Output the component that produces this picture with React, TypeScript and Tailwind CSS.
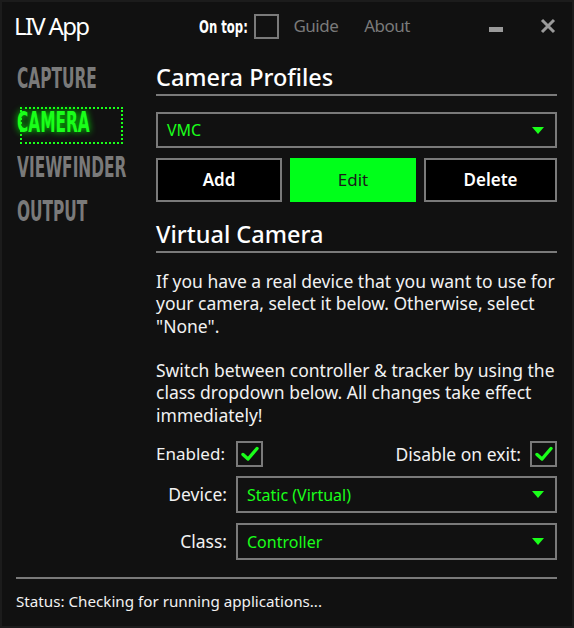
import React from "react";

const font = { fontFamily: '"Noto Sans", "Open Sans", sans-serif' };

function Arrow() {
  return (
    <svg width="12" height="7" viewBox="0 0 12 7" className="shrink-0">
      <polygon points="0,0 12,0 6,7" fill="#1aff1a" />
    </svg>
  );
}

function Select({ value, className = "" }: { value: string; className?: string }) {
  return (
    <div
      className={`flex items-center justify-between border-2 border-[#7a7a7a] bg-[#111111] pl-[9px] pr-[11px] ${className}`}
    >
      <span className="text-[16px] text-[#1aff1a]">{value}</span>
      <Arrow />
    </div>
  );
}

function Check({ checked }: { checked: boolean }) {
  return (
    <div className="flex h-[26px] w-[27px] items-center justify-center border-2 border-[#7a7a7a]">
      {checked && (
        <svg width="18" height="16" viewBox="0 0 18 16">
          <polyline
            points="2,8.5 7,13 16,2.5"
            fill="none"
            stroke="#1aff1a"
            strokeWidth="3.4"
            strokeLinecap="round"
            strokeLinejoin="round"
          />
        </svg>
      )}
    </div>
  );
}

function NavItem({ label, active, offset = "" }: { label: string; active?: boolean; offset?: string }) {
  return (
    <div className={`relative flex h-[44px] items-center ${offset}`}>
      {active && (
        <div className="absolute left-[3px] top-[7px] h-[37px] w-[103px] border-2 border-dotted border-[#1aff1a]" />
      )}
      <span
        className={`inline-block origin-left scale-x-[0.9] scale-y-[1.5] whitespace-nowrap text-[19px] font-bold leading-none ${
          active ? "text-[#1aff1a] [text-shadow:0_0_6px_#00ff00]" : "text-[#7a7a7a]"
        }`}
        style={{ fontFamily: '"DejaVu Sans Condensed", "DejaVu Sans", sans-serif' }}
      >
        {label}
      </span>
    </div>
  );
}

export default function App() {
  return (
    <div
      className="flex h-[628px] w-[574px] flex-col border-2 border-[#1c1c1c] bg-[#111111] text-[#f2f2f2]"
      style={font}
    >
      {/* Title bar */}
      <div className="flex h-[48px] items-center pl-[12px] pr-[16px]">
        <span className="text-[24px] leading-none tracking-[-1.7px] text-white">LIV App</span>
        <div className="ml-auto flex items-center">
          <span
            className="mr-[9px] inline-block w-[46px] origin-left scale-x-[0.72] whitespace-nowrap text-[18px] font-bold text-white"
            style={{ fontFamily: '"DejaVu Sans Condensed", sans-serif' }}
          >
            On top:
          </span>
          <div className="h-[25px] w-[25px] border-2 border-[#7a7a7a]" />
          <span className="ml-[14px] text-[17px] tracking-[-0.5px] text-[#7a7a7a]">Guide</span>
          <span className="ml-[26px] text-[17px] tracking-[-0.5px] text-[#7a7a7a]">About</span>
          <div className="ml-[79px] mt-[6px] h-[5px] w-[14px] bg-[#9a9a9a]" />
          <svg width="16" height="16" viewBox="0 0 16 16" className="ml-[37px]">
            <path d="M2 2 L14 14 M14 2 L2 14" stroke="#9a9a9a" strokeWidth="3" />
          </svg>
        </div>
      </div>

      {/* Body */}
      <div className="flex h-[527px]">
        {/* Sidebar */}
        <div className="w-[154px] pl-[15px] pt-[6px]">
          <NavItem label="CAPTURE" />
          <NavItem label="CAMERA" active />
          <NavItem label="VIEWFINDER" offset="mt-[1px]" />
          <NavItem label="OUTPUT" />
        </div>

        {/* Main */}
        <div className="flex w-[401px] flex-col pt-[12px]">
          <div className="h-[30px] text-[23.5px] font-medium leading-[30px] text-white">Camera Profiles</div>
          <div className="mt-[2px] h-[2px] bg-[#7a7a7a]" />
          <Select value="VMC" className="mt-[16px] h-[36px]" />
          <div className="mt-[10px] flex h-[44px] gap-[8px]">
            <button className="w-[126px] border-2 border-[#7a7a7a] bg-black text-[17px] font-semibold text-white">
              Add
            </button>
            <button className="w-[126px] bg-[#00ff1a] text-[17px] text-[#1a1a1a]">Edit</button>
            <button className="flex-1 border-2 border-[#7a7a7a] bg-black text-[17px] font-semibold text-white">
              Delete
            </button>
          </div>

          <div className="mt-[17px] h-[30px] text-[23.5px] font-medium leading-[30px] text-white">
            Virtual Camera
          </div>
          <div className="mt-[2px] h-[2px] bg-[#7a7a7a]" />

          <div className="mt-[17px] text-[17.5px] leading-[22.3px] text-[#f2f2f2]">
            <p>
              If you have a real device that you want to use for your camera, select it below. Otherwise, select
              "None".
            </p>
            <p className="mt-[22.3px]">
              Switch between controller &amp; tracker by using the class dropdown below. All changes take effect
              immediately!
            </p>
          </div>

          <div className="mt-[15px] flex h-[26px] items-center">
            <span className="w-[71px] text-[17px]">Enabled:</span>
            <div className="ml-[9px]">
              <Check checked />
            </div>
            <span className="ml-auto mr-[9px] text-[17.5px]">Disable on exit:</span>
            <Check checked />
          </div>

          <div className="mt-[9px] grid grid-cols-[71px_1fr] items-center gap-x-[9px] gap-y-[10px]">
            <span className="text-right text-[17.5px]">Device:</span>
            <Select value="Static (Virtual)" className="h-[37px]" />
            <span className="text-right text-[17.5px]">Class:</span>
            <Select value="Controller" className="h-[37px]" />
          </div>
        </div>
      </div>

      {/* Footer */}
      <div className="pl-[14px] pr-[15px]">
        <div className="h-[2px] bg-[#7a7a7a]" />
        <div className="mt-[10px] text-[15.2px] leading-[24px] text-[#f2f2f2]">
          Status: Checking for running applications...
        </div>
      </div>
    </div>
  );
}
